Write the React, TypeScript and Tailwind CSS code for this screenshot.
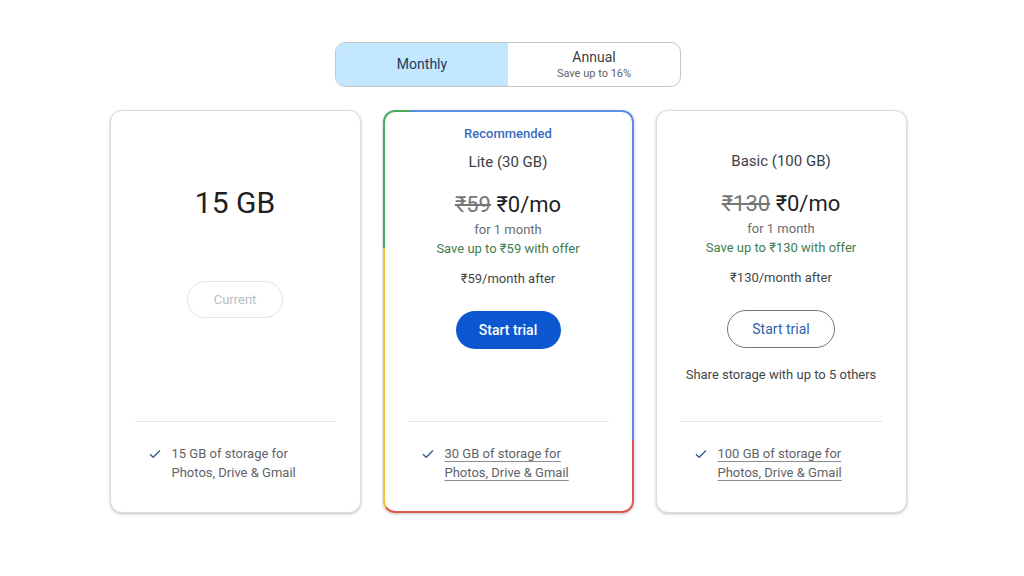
import { ReactNode } from 'react'

const font = { fontFamily: 'Roboto, "Noto Sans", Arial, sans-serif' }

function Check() {
  return (
    <svg width="12" height="10" viewBox="0 0 12 10" className="mt-[5px] shrink-0">
      <path d="M1 5.2 L4.2 8.2 L11 1.4" fill="none" stroke="#3b5b95" strokeWidth="1.4" />
    </svg>
  )
}

function Feature({ text1, text2, link, tight }: { text1: string; text2: string; link?: boolean; tight?: boolean }) {
  return (
    <div className={'mt-auto border-t border-[#e3e3e3] pt-[22px] ' + (tight ? 'pb-[29px]' : 'pb-[30px]')}>
      <div className="flex gap-[11px] pl-[14px]">
        <Check />
        <p
          className={
            'text-[13px] leading-[19px] text-[#5f6368] ' +
            (link ? 'underline decoration-[#8a8d91] underline-offset-[3px]' : '')
          }
        >
          {text1}
          <br />
          {text2}
        </p>
      </div>
    </div>
  )
}

function Card({ children, highlight }: { children: ReactNode; highlight?: boolean }) {
  if (highlight) {
    return (
      <div className="h-[403px] w-[251px] rounded-[12px] p-[2px] shadow-[0_1px_3px_rgba(0,0,0,0.25)] [background:conic-gradient(#5a8ee8_0deg_136deg,#e0574a_136deg_212deg,#f2c43c_212deg_297deg,#4caa60_297deg_334deg,#5a8ee8_334deg)]">
        <div className="flex h-full flex-col rounded-[10px] bg-white px-[23px]">{children}</div>
      </div>
    )
  }
  return (
    <div className="flex h-[403px] w-[251px] flex-col rounded-[12px] border border-[#dadce0] bg-white px-[24px] shadow-[0_1px_3px_rgba(0,0,0,0.25)]">
      {children}
    </div>
  )
}

function Plan({
  label,
  title,
  old,
  save,
  after,
  filled,
  share,
  gb,
}: {
  label?: string
  title: string
  old: string
  save: string
  after: string
  filled?: boolean
  share?: string
  gb: string
}) {
  return (
    <>
      <div className="mt-[13px] h-[18px] text-center text-[13px] leading-[18px] font-medium text-[#3a6cc0]">
        {label}
      </div>
      <div className="mt-[8px] text-center text-[15px] leading-[22px] text-[#3c4043]">{title}</div>
      <div className="mt-[17px] text-center text-[22px] leading-[30px] text-[#1f1f1f]">
        <span className="text-[#747775] line-through decoration-[1.5px]">{old}</span> ₹0/mo
      </div>
      <div className="text-center text-[13px] leading-[19px] text-[#6b6e72]">for 1 month</div>
      <div className="text-center text-[13px] leading-[19px] text-[#3f7d4e]">{save}</div>
      <div className="mt-[11px] text-center text-[13px] leading-[19px] text-[#444746]">{after}</div>
      <div className="mt-[23px] flex justify-center">
        {filled ? (
          <button className="h-[38px] w-[105px] rounded-full bg-[#0b57d0] text-[14px] font-medium text-white">
            Start trial
          </button>
        ) : (
          <button className="h-[38px] w-[108px] rounded-full border border-[#747775] bg-white text-[14px] text-[#2f5fa8]">
            Start trial
          </button>
        )}
      </div>
      {share && <div className="mt-[17px] text-center text-[13px] leading-[19px] text-[#444746]">{share}</div>}
      <Feature text1={`${gb} of storage for`} text2="Photos, Drive & Gmail" link tight={!!label} />
    </>
  )
}

export default function App() {
  return (
    <div className="min-h-[576px] w-full bg-white" style={font}>
      <div className="flex w-[1016px] flex-col items-center pt-[42px]">
        <div className="flex h-[45px] w-[346px] overflow-hidden rounded-[10px] border border-[#c4c7c5]">
          <div className="flex w-1/2 items-center justify-center bg-[#c2e7ff] text-[14px] text-[#1e3a5c]">
            Monthly
          </div>
          <div className="flex w-1/2 flex-col items-center justify-center">
            <span className="text-[14px] leading-[17px] text-[#3c4043]">Annual</span>
            <span className="text-[11px] leading-[15px] text-[#5f6368]">Save up to 16%</span>
          </div>
        </div>

        <div className="mt-[23px] flex gap-[22px]">
          <Card>
            <div className="mt-[74px] text-center text-[30px] leading-[36px] text-[#1f1f1f]">15 GB</div>
            <div className="mt-[60px] flex justify-center">
              <div className="flex h-[37px] w-[96px] items-center justify-center rounded-full border border-[#e3e3e3] text-[13px] text-[#b9bcbf]">
                Current
              </div>
            </div>
            <Feature text1="15 GB of storage for" text2="Photos, Drive & Gmail" />
          </Card>
          <Card highlight>
            <Plan
              label="Recommended"
              title="Lite (30 GB)"
              old="₹59"
              save="Save up to ₹59 with offer"
              after="₹59/month after"
              filled
              gb="30 GB"
            />
          </Card>
          <Card>
            <Plan
              title="Basic (100 GB)"
              old="₹130"
              save="Save up to ₹130 with offer"
              after="₹130/month after"
              share="Share storage with up to 5 others"
              gb="100 GB"
            />
          </Card>
        </div>
      </div>
    </div>
  )
}
